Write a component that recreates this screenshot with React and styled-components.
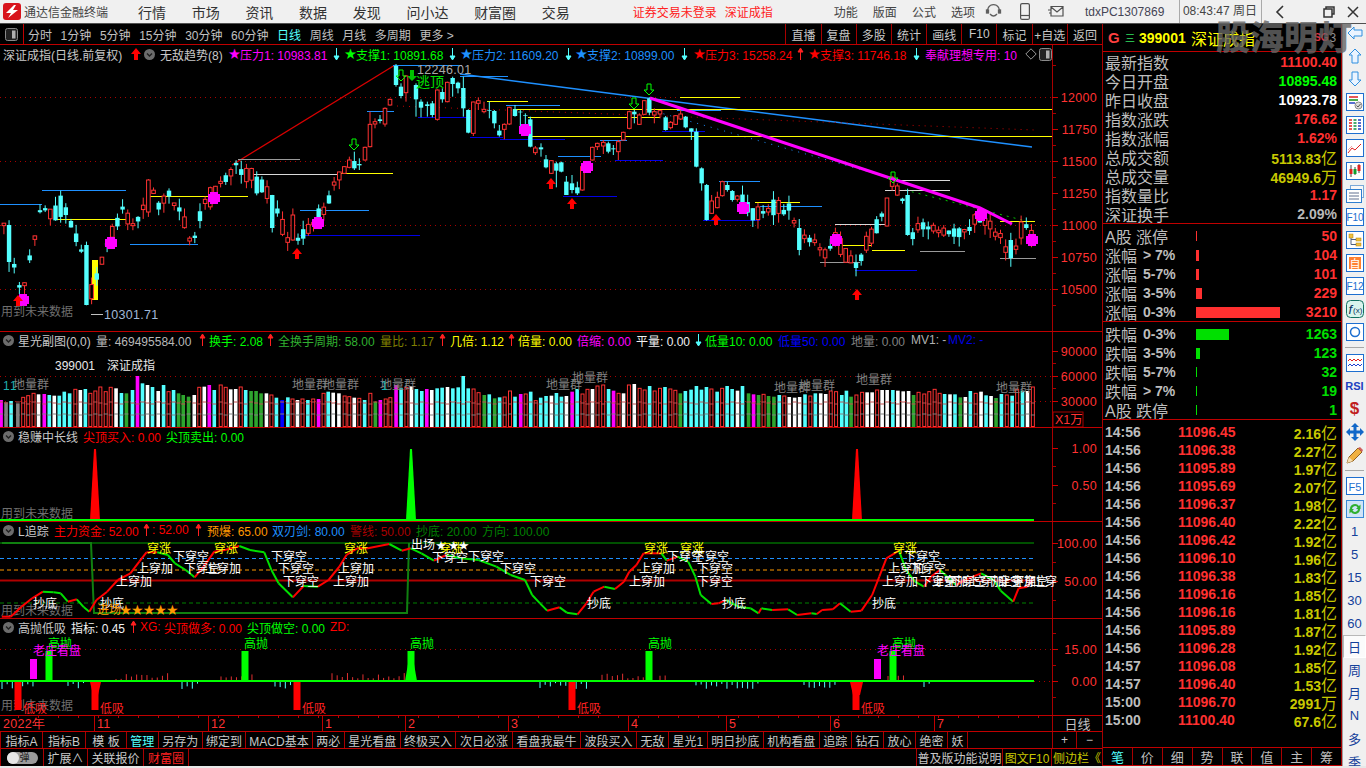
import React from "react";
import styled, { createGlobalStyle } from "styled-components";

const FONT = `"Liberation Sans", "Noto Sans CJK SC", sans-serif`;
const RED = "#a80000";
const TICK = "#ff3232";
const CYAN = "#54ffff";
const LBLUE = "#1e90ff";
const DBLUE = "#0000e6";
const YELLOW = "#ffff00";

const GlobalStyle = createGlobalStyle`
  html, body { margin: 0; padding: 0; background: #f0f0f0; }
  * { box-sizing: border-box; }
`;

const Root = styled.div`
  position: relative;
  width: 1366px;
  height: 768px;
  overflow: hidden;
  font-family: ${FONT};
  font-size: 12px;
  background: #f0f0f0;
  display: flex;
  flex-direction: column;
`;

/* ---------- title bar ---------- */
const TitleBar = styled.div`
  height: 24px;
  flex: none;
  display: flex;
  align-items: center;
  padding-left: 3px;
  background: #f0f0f0;
  border-bottom: 1px solid #505050;
  color: #444;
  white-space: nowrap;
`;
const AppName = styled.span`
  margin-left: 3px;
  width: 114px;
  font-size: 12px;
`;
const Menu = styled.div`
  display: flex;
  gap: 25.7px;
  font-size: 14px;
  color: #333;
`;
const Alert = styled.span`
  color: #ff2020;
  margin-left: ${(p) => p.$ml}px;
`;
const SysMenu = styled.div`
  display: flex;
  gap: 15px;
  margin-left: 61px;
`;
const IconGroup = styled.div`
  display: flex;
  align-items: center;
  gap: 18px;
  margin-left: 10px;
  width: 100px;
`;
const PcName = styled.span`
  width: 94px;
  color: #445;
`;
const Clock = styled.span`
  width: 83px;
  padding-left: 3px;
  height: 23px;
  line-height: 23px;
  border-left: 1px solid #aaa;
  border-right: 1px solid #aaa;
  color: #444;
`;
const WinControls = styled.div`
  display: flex;
  align-items: center;
  gap: 12px;
  margin-left: 13px;
`;
const WinGap = styled.span`
  width: 14px;
`;

/* ---------- toolbar ---------- */
const Body = styled.div`
  flex: none;
  height: 742px;
  display: flex;
  background: #000;
`;
const ChartColumn = styled.div`
  width: 1102px;
  flex: none;
  display: flex;
  flex-direction: column;
`;
const Toolbar = styled.div`
  height: 21px;
  flex: none;
  display: flex;
  align-items: center;
  border-bottom: 1px solid #c00000;
  color: #c0c0c0;
  white-space: nowrap;
`;
const ToggleCell = styled.div`
  width: 24px;
  height: 100%;
  display: flex;
  align-items: center;
  justify-content: center;
  border-right: 1px solid #c00000;
  margin-right: 4px;
`;
const Period = styled.span`
  margin-right: 8.6px;
  color: ${(p) => (p.$active ? CYAN : "#c0c0c0")};
`;
const ToolGroup = styled.div`
  margin-left: auto;
  display: flex;
  height: 100%;
`;
const ToolBtn = styled.div`
  width: 35.2px;
  display: flex;
  align-items: center;
  justify-content: center;
  border-left: 1px solid ${RED};
  color: #c8c8c8;
`;

/* ---------- panes ---------- */
const Pane = styled.div`
  position: relative;
  flex: none;
  height: ${(p) => p.$h}px;
  border-top: ${(p) => (p.$first ? "none" : `1px solid #c00000`)};
`;
const PaneSvg = styled.svg`
  display: block;
`;
const Legend = styled.div`
  position: absolute;
  left: 0;
  top: ${(p) => p.$top || 0}px;
  height: 16px;
  display: flex;
  align-items: center;
  white-space: nowrap;
  font-size: 12px;
`;
const LegendItem = styled.span`
  flex: none;
  width: ${(p) => p.$w}px;
  color: ${(p) => p.$c};
  display: inline-flex;
  align-items: center;
`;
const ChartText = styled.text`
  font-family: ${FONT};
  font-size: ${(p) => p.$size || 12}px;
`;
const AxisText = styled.text`
  font-family: "Liberation Sans", sans-serif;
  font-size: 12.5px;
  letter-spacing: 0.3px;
`;

/* ---------- bottom ---------- */
const DateRow = styled.div`
  height: 17px;
  flex: none;
  display: flex;
  border-top: 1px solid #c00000;
  border-bottom: 1px solid #c00000;
`;
const DateCell = styled.div`
  flex: 1;
  display: flex;
  align-items: center;
  justify-content: center;
  color: #c0c0c0;
  font-size: 13px;
  border-left: 1px solid ${RED};
`;
const TabRow = styled.div`
  height: ${(p) => p.$h}px;
  flex: none;
  display: flex;
  border-bottom: 1px solid #c00000;
  color: #c8c8c8;
  white-space: nowrap;
  border-left: 1px solid ${RED};
`;
const Tab = styled.div`
  flex: none;
  width: ${(p) => p.$w}px;
  display: flex;
  align-items: center;
  justify-content: center;
  border-right: ${(p) => (p.$open ? "none" : `1px solid ${RED}`)};
  border-left: ${(p) => (p.$lead ? `1px solid ${RED}` : "none")};
  color: ${(p) => p.$c || "#c8c8c8"};
`;
const TabSpacer = styled.div`
  margin-left: auto;
`;
const Pill = styled.div`
  width: 31px;
  height: 12px;
  border-radius: 6px;
  background: #9a9a9a;
  position: relative;
  color: #222;
  font-size: 10px;
  line-height: 12px;
  padding-left: 13px;
  &::before {
    content: "";
    position: absolute;
    left: 0;
    top: 0;
    width: 12px;
    height: 12px;
    border-radius: 50%;
    background: #e6e6e6;
  }
`;
const FooterStrip = styled.div`
  flex: 1;
  background: #e8e8e8;
`;

/* ---------- quote panel ---------- */
const QuotePanel = styled.div`
  width: 240px;
  flex: none;
  display: flex;
  flex-direction: column;
  border-left: 1px solid ${RED};
  border-right: 1px solid ${RED};
  border-bottom: 1px solid #c00000;
`;
const QuoteHead = styled.div`
  height: 28px;
  flex: none;
  display: flex;
  align-items: center;
  padding-left: 5px;
  border-bottom: 1px solid #c00000;
  color: ${YELLOW};
  font-size: 16px;
  white-space: nowrap;
`;
const HeadG = styled.span`
  color: #ff4040;
  font-weight: bold;
  font-size: 15px;
  width: 17px;
`;
const HeadBars = styled.span`
  color: #30e060;
  font-size: 10px;
  width: 14px;
`;
const HeadCode = styled.span`
  font-weight: bold;
  font-size: 14px;
  width: 52px;
`;
const HeadSg = styled.span`
  margin-left: 59px;
  color: #e03040;
  font-size: 10px;
  font-weight: bold;
`;
const HeadThree = styled.span`
  color: #909090;
  font-size: 12px;
  margin-left: 1px;
`;
const Section = styled.div`
  flex: none;
  padding-bottom: ${(p) => p.$pb || 0}px;
  border-bottom: 1px solid #c00000;
`;
const QuoteRow = styled.div`
  height: 19px;
  display: flex;
  align-items: center;
  justify-content: space-between;
  padding: 0 4px 0 2px;
  font-size: 16px;
  color: #bdbdbd;
`;
const Num = styled.span`
  font-weight: bold;
  font-size: 14px;
  color: ${(p) => p.$c};
`;
const Unit = styled.span`
  font-weight: normal;
  font-size: 16px;
  color: ${(p) => p.$c};
`;
const BandRow = styled.div`
  height: 19px;
  display: grid;
  grid-template-columns: 91px 1fr auto;
  align-items: center;
  padding: 0 4px 0 2px;
  font-size: 16px;
  color: #bdbdbd;
`;
const BandLabel = styled.span`
  display: flex;
  align-items: center;
  gap: 6px;
  white-space: nowrap;
`;
const BandRange = styled.span`
  font-weight: bold;
  font-size: 14px;
`;
const BandBar = styled.div`
  height: ${(p) => (p.$w > 1 ? 11 : 10)}px;
  width: ${(p) => p.$w}px;
  background: ${(p) => p.$c};
`;
const TickList = styled.div`
  flex: 1;
`;
const TickRow = styled.div`
  height: 18px;
  display: grid;
  grid-template-columns: 73px 60px 1fr;
  align-items: center;
  padding: 0 4px 0 2px;
`;
const TickVol = styled.span`
  text-align: right;
`;
const QuoteTabs = styled.div`
  height: 18px;
  flex: none;
  display: flex;
  border-top: 1px solid #c00000;
`;
const QuoteTab = styled.div`
  flex: 1;
  display: flex;
  align-items: center;
  justify-content: center;
  font-size: 13px;
  color: ${(p) => (p.$active ? CYAN : "#bdbdbd")};
  border-right: 1px solid ${RED};
  &:last-child {
    border-right: none;
  }
`;

/* ---------- side bar ---------- */
const SideBar = styled.div`
  flex: 1;
  background: #f0f0f0;
  border-left: 1px solid #a0a0a0;
  display: flex;
  flex-direction: column;
  overflow: hidden;
`;
const SideInner = styled.div`
  margin-top: -3px;
  display: flex;
  flex-direction: column;
  align-items: center;
`;
const SideItem = styled.div`
  height: 23px;
  width: 23px;
  flex: none;
  display: flex;
  align-items: center;
  justify-content: center;
  color: ${(p) => p.$c || "#14409a"};
  font-size: ${(p) => p.$size || 13}px;
  font-weight: ${(p) => (p.$bold ? "bold" : "normal")};
  ${(p) =>
    p.$active &&
    `background:#fbfbfb;border:1px solid #b8b8b8;border-right-color:#fff;border-bottom-color:#fff;`}
`;
const SideRule = styled.div`
  width: 19px;
  height: 8px;
  flex: none;
  display: flex;
  align-items: center;
  &::after {
    content: "";
    width: 100%;
    height: 1px;
    background: #a8a8a8;
  }
`;
const Watermark = styled.div`
  position: absolute;
  left: 1216px;
  top: 14px;
  font-size: 34px;
  line-height: 44px;
  font-weight: 900;
  font-family: "Noto Sans CJK SC", sans-serif;
  color: #666;
  opacity: 0.8;
  white-space: nowrap;
  pointer-events: none;
`;

/* ---------- data ---------- */
const makeRnd = (seed) => () => {
  seed = (seed * 16807) % 2147483647;
  return (seed - 1) / 2147483646;
};
const interp = (pts, x) => {
  for (let i = 1; i < pts.length; i++) {
    if (x <= pts[i][0]) {
      const [x0, y0] = pts[i - 1];
      const [x1, y1] = pts[i];
      return y0 + ((y1 - y0) * (x - x0)) / (x1 - x0);
    }
  }
  return pts[pts.length - 1][1];
};

const LEFT_PATH = [
  [0, 225], [10, 235], [18, 285], [24, 290], [32, 250], [42, 200], [52, 215], [62, 205], [72, 225], [85, 255],
  [90, 300], [100, 270], [110, 240], [122, 210], [135, 225], [150, 185], [160, 205], [170, 195], [180, 210],
  [192, 245], [205, 200], [218, 185], [235, 165], [250, 175], [262, 185], [275, 205], [285, 235], [297, 240],
  [308, 225], [320, 215], [332, 190], [344, 170],
];
const RIGHT_PATH = [
  [737, 197], [745, 205], [760, 215], [775, 205], [790, 212], [800, 235], [815, 245], [825, 258], [835, 240],
  [845, 250], [855, 265], [870, 240], [882, 215], [892, 182], [902, 195], [912, 235], [925, 225], [940, 232],
  [955, 235], [970, 225], [985, 220], [1000, 235], [1012, 257], [1022, 228], [1034, 235],
];
// peak section, read off the chart: x, body top, body bottom, wick top, wick bottom, up
const PEAK = [
  [13,320,340,318,342,1],[28,300,322,290,325,1],[43,303,325,275,330,0],[58,312,316,295,330,0],[75,262,300,260,302,1],
  [90,193,260,155,262,1],[105,185,192,175,205,1],[120,178,183,165,190,0],[135,145,192,142,200,1],[150,118,135,116,137,1],
  [168,18,75,12,80,0],[183,80,108,70,115,0],[198,48,98,45,125,1],[228,75,118,70,170,0],[243,125,143,118,172,0],
  [262,133,138,125,170,0],[277,130,165,123,172,0],[292,90,178,88,182,1],[307,96,118,85,128,0],[322,67,125,65,127,1],
  [338,54,72,50,110,0],[354,68,85,65,100,0],[370,84,145,50,170,0],[385,150,218,148,220,0],[400,126,220,125,228,1],
  [415,122,130,112,150,1],[432,148,155,125,160,1],[448,150,152,125,175,0],[463,153,190,150,205,0],[478,212,226,195,230,0],
  [493,193,208,190,238,1],[508,142,192,140,195,1],[525,148,168,135,170,0],[541,155,157,150,200,0],[556,165,167,160,195,0],
  [571,178,260,170,262,0],[586,264,278,258,285,1],[603,262,268,250,290,0],[618,298,322,285,325,0],[634,302,340,300,342,1],
  [649,310,332,305,382,0],[664,307,335,305,337,0],[679,365,405,348,405,0],[696,370,390,345,400,0],[712,382,400,365,405,0],
  [727,320,390,320,392,1],[757,262,300,260,302,1],[772,250,260,248,270,1],[790,247,258,240,282,1],[805,250,275,245,280,0],
  [820,265,268,255,285,0],[835,245,275,240,300,1],[850,217,240,215,242,1],[868,155,205,152,208,1],[883,155,163,150,190,0],
  [898,165,193,160,195,1],[913,122,163,120,165,1],[928,115,158,112,165,0],[943,155,165,145,190,1],[960,152,162,150,175,1],
  [977,172,210,168,212,0],[992,187,203,183,208,1],[1007,167,193,165,195,1],[1022,162,177,150,180,1],[1037,170,202,168,205,0],
  [1054,205,215,205,240,0],[1069,215,320,205,322,0],[1085,325,370,322,392,0],[1100,375,480,372,482,0],[1115,423,460,405,462,1],
  [1132,412,443,395,445,1],[1147,365,407,362,410,1],[1162,375,390,365,395,0],[1177,393,420,390,425,0],[1192,408,418,405,425,1],
].map(([zx, t, b, wt, wb, up]) => ({
  x: 340 + zx / 3,
  top: 60 + t / 3,
  bottom: 60 + b / 3,
  wickTop: 60 + wt / 3,
  wickBottom: 60 + wb / 3,
  up: !!up,
}));

// the tall bodies that stand out from the generated series: x, top, bottom, up
const TALL = [
  [8, 225, 262, 0], [88, 245, 305, 0], [150, 180, 212, 1], [270, 195, 228, 0], [293, 215, 240, 1], [362, 148, 172, 1],
  [800, 228, 250, 0], [885, 198, 226, 1], [906, 195, 235, 0], [1012, 240, 258, 0], [1021, 222, 238, 1],
];

const genCandles = (path, x0, x1, seed) => {
  const rnd = makeRnd(seed);
  const out = [];
  for (let x = x0; x <= x1; x += 5.16) {
    const tall = TALL.find((t) => Math.abs(t[0] - x) < 2.6);
    const center = interp(path, x) + (rnd() - 0.5) * 9;
    const size = 2 + rnd() * rnd() * 20;
    const isUp = rnd() < 0.52;
    const top = tall ? tall[1] : center - size / 2;
    const bottom = tall ? tall[2] : center + size / 2;
    out.push({
      x,
      top,
      bottom,
      wickTop: top - rnd() * 9,
      wickBottom: bottom + rnd() * 10,
      up: tall ? !!tall[3] : isUp,
    });
  }
  return out;
};
const CANDLES = [
  ...genCandles(LEFT_PATH, 3.9, 340, 77),
  ...PEAK,
  ...genCandles(RIGHT_PATH, 742.5, 1034, 4242),
];

const SEGMENTS = [
  [0, 42, 204, LBLUE], [42, 126, 190, LBLUE], [55, 130, 219, YELLOW], [130, 198, 244, LBLUE], [150, 248, 196, YELLOW],
  [238, 300, 159, "#9a9a9a"], [252, 340, 174, "#d8d8d8"], [340, 393, 173, YELLOW], [300, 369, 210, LBLUE],
  [300, 420, 235, DBLUE], [367, 394, 111, LBLUE], [393, 462, 65, LBLUE], [460, 508, 76, LBLUE], [418, 471, 117, DBLUE],
  [470, 503, 137, DBLUE], [500, 565, 139, DBLUE], [487, 528, 101, YELLOW], [506, 560, 105, LBLUE], [558, 601, 156, LBLUE],
  [600, 627, 140, LBLUE], [615, 663, 160, DBLUE], [563, 617, 196, DBLUE], [662, 705, 131, DBLUE], [703, 760, 220, DBLUE],
  [719, 760, 181, LBLUE], [677, 721, 110, LBLUE], [513, 1052, 109, YELLOW], [530, 1052, 136, YELLOW], [528, 660, 117, YELLOW],
  [680, 740, 97, YELLOW], [755, 800, 202, YELLOW], [760, 822, 206, LBLUE], [835, 885, 224, "#d8d8d8"], [820, 860, 262, "#9a9a9a"],
  [855, 917, 270, DBLUE], [840, 872, 245, YELLOW], [872, 905, 250, YELLOW], [885, 950, 190, "#d8d8d8"], [900, 950, 180, "#d8d8d8"],
  [920, 965, 251, "#9a9a9a"], [1000, 1035, 221, YELLOW], [1000, 1036, 258, "#9a9a9a"],
];
const BLOBS = [[23, 300], [111, 243], [214, 198], [318, 223], [525, 130], [587, 167], [743, 208], [836, 240], [981, 215], [1032, 240]];
const RED_ARROWS = [[18, 295], [297, 248], [551, 178], [572, 198], [716, 214], [857, 289]];
const GREEN_ARROWS = [[354, 144], [634, 103], [649, 89], [893, 177], [401, 75]];

const VOL_A = "3M225 17G232 31C228 50G235 65R217 79R212 94R205 108W208 124M207 138C210 152W212 166C212 180C200 195C205 211R193 225W195 239C192 253R205 267R198 281R186 296R200 310R187 325W190 340C204 354N205 371C195 385M153 399C175 413W180 427C186 443W198 458C180 472R200 486C195 500N205 513N210 528N215 544W210 558R187 572W185 586M180 600C195 618R180 632R187 646W193 660W192 674R186 688C195 703N198 717N198 731N205 746W205 760R210 774C218 790B225 806C217 819R222 833W225 847R222 862C225 877R222 892M222 906R205 919C200 933W203 949W205 965R213 978R215 992W218 1006R220 1021C225 1037R205 1051N230 1065M225 1080R222 1093R218 1109M180 1123C190 1138R187 1152W183 1166C192 1181C198 1195M192 1209W195 1224C190 1238C188 1253W186 1268C190 1283C187 1297C153 1311C190 1326R192 1340R203 1356N210 1370C208 1385N220 1399C217 1413R216 1428R198 1442C215 1458M207 1472R207 1486C200 1500R227";
const VOL_B = "2C218 17C213 32W212 46C204 60C215 74W213 90M200 104C192 119R207 133R193 147W192 161R183 177R180 192C192 206M197 220R205 234W205 249R180 264W177 279R190 293R195 307C183 321R198 336R190 350C186 365R192 379R196 393N205 407C198 423C194 438C183 452C194 466C186 480R192 496C200 510R190 524C183 538C192 553W197 567C183 584N205 598M208 612N210 626R208 640N213 655N215 670C210 684R213 698W216 713W218 727W216 742C208 757R213 771C205 786W205 800W207 814R198 829R200 845C210 858C197 871N215 886R210 902R202 916W202 930W202 944R195 958W195 972W195 988C195 1002W197 1017W199 1032W198 1046N210 1060R202 1076R207 1090R200 1105R193 1119R205 1133C207 1148W208 1162C208 1177N217 1191W216 1205C198 1220R205 1235W200 1249C211 1263W213 1277N219 1292C207 1307R210 1322C212 1336R193 1351C197 1365W198 1380R186";
const VOL_COLORS = { M: "#ff00ff", G: "#808080", C: CYAN, W: "#ffffff", N: "#2ea52e", B: "#0000ff" };
const parseVol = (s, x0) =>
  s.split(" ").map((t) => {
    const m = t.match(/^(\d+)([A-Z])(\d+)$/);
    return { x: x0 + Number(m[1]) / 2.8, kind: m[2], top: 325 + Number(m[3]) / 3 };
  });
const VOLUMES = [...parseVol(VOL_A, 0), ...parseVol(VOL_B, 540)];

const zc = (pts, x0) => pts.map(([x, y]) => [x0 + x / 2.8, 520 + y / 3]);
const TRACK = [
  ...zc([[5,290],[30,290],[60,260],[90,235],[120,215],[150,217],[170,220],[190,245],[215,238],[235,262],[250,275],[270,240],[300,215],[330,180],[365,160],[390,125],[410,97],[440,97],[470,105],[490,130],[520,150],[545,172],[570,140],[600,95],[630,90],[670,78],[700,90],[740,97],[760,150],[780,190],[820,232],[850,198],[890,200],[920,180],[950,140],[970,105],[1000,85],[1030,85],[1090,72],[1125,92],[1150,85],[1180,100],[1215,122],[1250,105],[1290,115],[1340,120],[1390,140],[1430,165],[1470,180],[1490,225]], 0),
  ...zc([[0,250],[20,272],[55,262],[75,278],[105,283],[130,250],[150,215],[180,200],[210,207],[235,185],[250,155],[270,135],[290,100],[340,100],[355,122],[385,110],[415,125],[435,170],[450,225],[480,252],[500,250],[520,240],[560,262],[590,265],[612,280],[620,265],[650,270],[695,268],[720,285],[760,280],[775,282],[790,270],[820,268],[840,250],[870,275],[900,272],[930,225],[950,170],[970,115],[1005,92],[1025,150],[1050,185],[1075,200],[1095,170],[1120,150],[1135,165],[1165,195],[1200,175],[1235,160],[1270,180],[1290,212],[1325,245],[1340,205],[1365,200],[1380,172]], 540),
];
const W = "#ffffff";
const TRACK_LABELS = [
  [33,603,"抄底",W],[100,603,"抄底",W],[97,609,"进场","#ff9900"],[116,581,"上穿加",W],[137,568,"上穿加",W],[173,556,"下穿空",W],
  [184,568,"下穿空",W],[205,568,"上穿加",W],[147,548,"穿涨",YELLOW],[214,548,"穿涨",YELLOW],[271,556,"下穿空",W],[278,568,"下穿空",W],
  [283,581,"下穿空",W],[344,548,"穿涨",YELLOW],[338,568,"上穿加",W],[333,581,"上穿加",W],[411,544,"出场",W],[439,548,"穿涨",YELLOW],
  [432,557,"下穿空",W],[468,556,"下穿空",W],[500,568,"下穿空",W],[530,581,"下穿空",W],[587,603,"抄底",W],[639,568,"上穿加",W],
  [629,581,"上穿加",W],[644,548,"穿涨",YELLOW],[680,548,"穿涨",YELLOW],[667,556,"下穿空",W],[693,556,"下穿空",W],[697,568,"下穿空",W],
  [697,581,"下穿空",W],[722,603,"抄底",W],[872,603,"抄底",W],[893,548,"穿涨",YELLOW],[904,556,"下穿空",W],[888,568,"上穿加",W],
  [910,568,"下穿空",W],[882,581,"上穿加",W],[920,581,"下穿空",W],[932,581,"上穿加",W],[950,581,"下穿空",W],[968,581,"上穿加",W],
  [986,581,"下穿空",W],[1000,581,"上穿加",W],[1012,581,"下穿空",W],[1033,581,"上穿",W],
];
const VOL_LABELS = [[13,385],[292,385],[323,385],[380,385],[546,385],[572,378],[774,388],[799,386],[856,380],[996,388]];

const UP_TICKS = [[116,172],[221,257],[332,407],[602,647],[660,666],[888,908]];
const DOWN_TICKS = [[2,35],[68,88],[182,200],[275,300],[540,587],[696,760],[804,835],[924,930]];
const GREEN_BARS = [[49,651],[245,651],[411,651],[649,651],[893,651]];
const DIP_BARS = [[18,710],[95,710],[297,710],[572,710],[856,710]];
const DATE_MARKS = [["11",94],["12",208],["1",322],["2",405],["3",508],["4",628],["5",726],["6",830],["7",934]];

const TAB_ROW = [
  ["指标A",42],["指标B",43],["模 板",41],["管理",31.5],["另存为",44.5],["绑定到",43],["MACD基本",67],["两必",31.5],["星光看盘",56.5],
  ["终极买入",55],["次日必涨",57],["看盘我最牛",68],["波段买入",56],["无敌",32],["星光1",38.5],["明日抄底",56.5],["机构看盘",55.6],
  ["追踪",32.4],["钻石",32],["放心",32],["绝密",32],["妖",20],
];
const TICKS = [
  ["14:56","11096.45","2.16","亿"],["14:56","11096.38","2.27","亿"],["14:56","11095.89","1.97","亿"],["14:56","11095.69","2.07","亿"],
  ["14:56","11096.37","1.98","亿"],["14:56","11096.40","2.22","亿"],["14:56","11096.42","1.92","亿"],["14:56","11096.10","1.96","亿"],
  ["14:56","11096.38","1.83","亿"],["14:56","11096.16","1.85","亿"],["14:56","11096.16","1.81","亿"],["14:56","11095.89","1.87","亿"],
  ["14:56","11096.28","1.92","亿"],["14:57","11096.08","1.85","亿"],["14:57","11096.40","1.53","亿"],["15:00","11096.70","2991","万"],
  ["15:00","11100.40","67.6","亿"],
];

/* ---------- small drawings ---------- */
const Chevron = () => (
  <svg width="11" height="11" viewBox="0 0 11 11">
    <circle cx="5.5" cy="5.5" r="5.5" fill="#6c6c6c" />
    <path d="M3 4.5 L5.5 7 L8 4.5" stroke="#202020" strokeWidth="1.4" fill="none" />
  </svg>
);
const ThinArrow = ({ up, color }) => (
  <svg width="7" height="14" viewBox="0 0 7 14">
    {up ? (
      <path d="M3.5 13V2 M1 5 L3.5 1 L6 5Z" stroke={color} fill={color} strokeWidth="1" />
    ) : (
      <path d="M3.5 1V12 M1 9 L3.5 13 L6 9Z" stroke={color} fill={color} strokeWidth="1" />
    )}
  </svg>
);
const BlockUp = () => (
  <svg width="10" height="12" viewBox="0 0 10 12">
    <path d="M5 0 L10 6 H7 V12 H3 V6 H0Z" fill="#ff0000" />
  </svg>
);
const SquareToggle = () => (
  <svg width="13" height="13" viewBox="0 0 13 13">
    <rect x="0.5" y="0.5" width="12" height="12" rx="2" fill="#222" stroke="#8a8a8a" />
    <rect x="7" y="2.5" width="3.5" height="8" fill="#b0b0b0" />
  </svg>
);
const Diamond = () => (
  <svg width="12" height="12" viewBox="0 0 12 12">
    <path d="M6 0.8 L11.2 6 L6 11.2 L0.8 6Z" fill="none" stroke="#9a9a9a" />
  </svg>
);
const Star = styled.span`
  font-family: "DejaVu Sans", sans-serif;
  font-size: 14.5px;
  width: 12px;
  line-height: 1;
`;
const Mark = ({ w, c, text, star }) => (
  <LegendItem $w={w} $c={c}>
    {star && <Star>★</Star>}
    {text}
  </LegendItem>
);

const SB = ({ children }) => (
  <svg width="18" height="18" viewBox="0 0 18 18">
    <rect x="0.5" y="0.5" width="17" height="17" fill="#fff" stroke="#1e6fd0" />
    {children}
  </svg>
);
const SideIcons = {
  left: (
    <svg width="16" height="14" viewBox="0 0 16 14"><path d="M1 7 L7 1 V4 H15 V10 H7 V13Z" fill="#eaf4ff" stroke="#2f8fe0" /></svg>
  ),
  up: (
    <svg width="14" height="16" viewBox="0 0 14 16"><path d="M7 1 L13 7 H10 V15 H4 V7 H1Z" fill="#eaf4ff" stroke="#2f8fe0" /></svg>
  ),
  down: (
    <svg width="14" height="16" viewBox="0 0 14 16"><path d="M7 15 L13 9 H10 V1 H4 V9 H1Z" fill="#eaf4ff" stroke="#2f8fe0" /></svg>
  ),
  report: (
    <SB>
      <path d="M3 4H12" stroke="#e02020" strokeWidth="1.5" />
      <path d="M3 7H12" stroke="#109010" strokeWidth="1.5" />
      <path d="M3 10H9" stroke="#2040c0" strokeWidth="1.5" />
      <circle cx="12.5" cy="12.5" r="3.5" fill="#ddd" stroke="#888" />
      <path d="M10.5 12.5 L12 14 L14.5 11" stroke="#555" fill="none" />
    </SB>
  ),
  grid: (
    <SB>
      <path d="M3 4H6 M3 7H6 M3 10H6 M3 13H6" stroke="#e02020" strokeWidth="1.5" />
      <path d="M7.5 4H10.5 M7.5 7H10.5 M7.5 10H10.5 M7.5 13H10.5" stroke="#109040" strokeWidth="1.5" />
      <path d="M12 4H15 M12 7H15 M12 10H15 M12 13H15" stroke="#2040c0" strokeWidth="1.5" />
    </SB>
  ),
  line: (
    <SB>
      <path d="M2 14 L6 9 L9 11 L15 5" stroke="#e02020" fill="none" />
      <path d="M2 11 L6 7" stroke="#e8a0a0" fill="none" />
    </SB>
  ),
  candle: (
    <SB>
      <path d="M5 3V15 M9 5V13 M13 2V11" stroke="#444" />
      <rect x="3.5" y="7" width="3" height="5" fill="#e02020" />
      <rect x="7.5" y="7" width="3" height="5" fill="#10a030" />
      <rect x="11.5" y="3" width="3" height="6" fill="#e02020" />
    </SB>
  ),
  cards: (
    <svg width="20" height="18" viewBox="0 0 20 18">
      <rect x="5.5" y="0.5" width="13" height="12" fill="#f8f8f8" stroke="#7aa8d8" />
      <rect x="1.5" y="4.5" width="15" height="13" fill="#fff" stroke="#2f7fd0" />
      <path d="M4 8H14 M4 11H14 M4 14H14" stroke="#607090" />
    </svg>
  ),
  f10: (
    <SB>
      <ChartText x="9" y="13" textAnchor="middle" fill="#1e6fd0" $size={10}>F10</ChartText>
    </SB>
  ),
  tree: (
    <SB>
      <rect x="3" y="3" width="4" height="4" fill="#f0c040" stroke="#b08000" strokeWidth="0.5" />
      <rect x="10" y="7" width="5" height="3" fill="#f0c040" stroke="#b08000" strokeWidth="0.5" />
      <rect x="10" y="12" width="5" height="3" fill="#f0c040" stroke="#b08000" strokeWidth="0.5" />
      <path d="M5 7V13.5H10 M5 8.5H10" stroke="#506080" fill="none" />
    </SB>
  ),
  zi: (
    <SB>
      <rect x="3" y="3" width="12" height="12" fill="#ff8030" />
      <ChartText x="9" y="13.5" textAnchor="middle" fill="#fff" $size={11}>自</ChartText>
    </SB>
  ),
  f12: (
    <SB>
      <ChartText x="9" y="13" textAnchor="middle" fill="#1e6fd0" $size={10}>F12</ChartText>
    </SB>
  ),
  fx: (
    <svg width="18" height="18" viewBox="0 0 18 18">
      <rect x="0.5" y="0.5" width="17" height="17" rx="4" fill="#d8f4ec" stroke="#107060" />
      <ChartText x="2.5" y="14" fill="#0a3060" $size={13} fontStyle="italic">f</ChartText>
      <ChartText x="7" y="13" fill="#0a3060" $size={8}>(x)</ChartText>
    </svg>
  ),
  circle: (
    <SB>
      <circle cx="9" cy="9" r="4.5" fill="none" stroke="#1e6fd0" strokeWidth="1.5" />
    </SB>
  ),
  wave: (
    <SB>
      <path d="M2 7 L4 5 L6 7 L8 5 L10 7 L12 5 L14 7 L16 5" stroke="#e02020" fill="none" />
      <path d="M2 12 L4 10 L6 12 L8 10 L10 12 L12 10 L14 12 L16 10" stroke="#2040d0" fill="none" />
    </SB>
  ),
  move: (
    <svg width="18" height="18" viewBox="0 0 18 18" fill="#1268c8">
      <path d="M9 0 L13 4 H10.5 V7.5 H14 V5 L18 9 L14 13 V10.5 H10.5 V14 H13 L9 18 L5 14 H7.5 V10.5 H4 V13 L0 9 L4 5 V7.5 H7.5 V4 H5Z" />
    </svg>
  ),
  pencil: (
    <svg width="18" height="18" viewBox="0 0 18 18">
      <path d="M1 17 L3 11 L12 2 L16 6 L7 15Z" fill="#f0b040" stroke="#906020" />
      <path d="M1 17 L3 11 L7 15Z" fill="#f4dcb0" />
      <path d="M12 2 L16 6 L17 4 L14 1Z" fill="#d06060" />
    </svg>
  ),
  f5: (
    <SB>
      <ChartText x="9" y="13.5" textAnchor="middle" fill="#1e6fd0" $size={11}>F5</ChartText>
    </SB>
  ),
  refresh: (
    <svg width="18" height="18" viewBox="0 0 18 18">
      <rect x="0.5" y="0.5" width="17" height="17" fill="#cfe4f8" stroke="#3a8ad8" />
      <path d="M4 9 A5 5 0 0 1 13 6 L14.5 4.5 V9 H10 L11.5 7.5 A3 3 0 0 0 6 9Z" fill="#30b030" />
      <path d="M14 9 A5 5 0 0 1 5 12 L3.5 13.5 V9 H8 L6.5 10.5 A3 3 0 0 0 12 9Z" fill="#30b030" />
    </svg>
  ),
};

/* ---------- chart panes ---------- */
const ChartSvg = ({ top, h, children }) => (
  <PaneSvg width="1102" height={h} viewBox={`0 ${top} 1102 ${h}`}>
    {children}
  </PaneSvg>
);
const Axis = ({ top, bottom, marks, minor = [] }) => (
  <g>
    <line x1="1052.5" y1={top} x2="1052.5" y2={bottom} stroke={RED} />
    {minor.map((y) => (
      <line key={y} x1="1052" y1={y + 0.5} x2="1056" y2={y + 0.5} stroke={RED} />
    ))}
    {marks.map(([y, label]) => (
      <g key={label}>
        <line x1="1052" y1={y + 0.5} x2="1058" y2={y + 0.5} stroke="#d00000" />
        <AxisText x="1097" y={y + 4.5} textAnchor="end" fill={TICK}>
          {label}
        </AxisText>
      </g>
    ))}
  </g>
);
const Dotted = ({ y, x2 = 1052 }) => (
  <line x1="0" y1={y + 0.5} x2={x2} y2={y + 0.5} stroke={RED} strokeDasharray="1 4" />
);
const Unreal = ({ y }) => (
  <ChartText x="1" y={y} fill="#6e6e6e">
    用到未来数据
  </ChartText>
);

const Candle = ({ c }) => {
  const color = c.up ? TICK : CYAN;
  return (
    <g>
      <line x1={c.x} y1={c.wickTop} x2={c.x} y2={c.wickBottom} stroke={color} />
      {c.up ? (
        <rect x={c.x - 1.8} y={c.top} width="3.6" height={c.bottom - c.top} fill="#000" stroke={color} />
      ) : (
        <rect x={c.x - 2.2} y={c.top} width="4.4" height={c.bottom - c.top} fill={color} />
      )}
    </g>
  );
};

const MainPane = () => (
  <Pane $h={286} $first>
    <ChartSvg top={45} h={286}>
      {[97, 161, 225, 289].map((y) => (
        <Dotted key={y} y={y} />
      ))}
      <Axis
        top={45}
        bottom={331}
        marks={[[97,"12000"],[129,"11750"],[161,"11500"],[193,"11250"],[225,"11000"],[257,"10750"],[289,"10500"]]}
        minor={[65,113,145,177,209,241,273,305]}
      />
      <polyline points="232,165 395,65" stroke="#d80000" strokeWidth="1.4" fill="none" />
      <polyline points="460,74 740,110 1032,147" stroke={LBLUE} strokeWidth="1.5" fill="none" />
      <polyline points="397,106 1035,130" stroke="#c00000" strokeDasharray="1 5" fill="none" />
      <polyline points="650,110 880,175" stroke={LBLUE} strokeDasharray="1 6" fill="none" />
      <polyline points="905,190 1030,222" stroke="#00c000" strokeDasharray="2 5" fill="none" />
      {SEGMENTS.map(([x1, x2, y, c], i) => (
        <line key={i} x1={x1} y1={y + 0.5} x2={x2} y2={y + 0.5} stroke={c} />
      ))}
      <rect x="92" y="260" width="6" height="40" fill={YELLOW} />
      {CANDLES.map((c, i) => (
        <Candle key={i} c={c} />
      ))}
      <polyline points="650,98 740,128 890,178 980,208 1012,224" stroke="#ff00ff" strokeWidth="3" fill="none" />
      {BLOBS.map(([x, y]) => (
        <g key={x} fill="#ff00ff">
          <rect x={x - 6} y={y - 4} width="12" height="8" />
          <rect x={x - 4} y={y - 6} width="8" height="12" />
        </g>
      ))}
      {RED_ARROWS.map(([x, y]) => (
        <path key={x} d={`M${x} ${y} l5 6 h-3 v5 h-4 v-5 h-3z`} fill="#ff0000" />
      ))}
      {GREEN_ARROWS.map(([x, y]) => (
        <path key={x} d={`M${x} ${y + 6} l5 -5 h-3 v-6 h-4 v6 h-3z`} fill="none" stroke="#00ff00" />
      ))}
      <path d="M412 81 l5 -5 h-3 v-6 h-4 v6 h-3z" fill="#00c000" />
      <AxisText x="417" y="74" fill="#a8a8a8">12246.01</AxisText>
      <ChartText x="416" y="87" fill="#00e000" $size={14}>逃顶</ChartText>
      <line x1="91" y1="314.5" x2="103" y2="314.5" stroke="#c0c0c0" />
      <AxisText x="104" y="319" fill="#a0b8d8">10301.71</AxisText>
      <Unreal y={316} />
    </ChartSvg>
    <Legend $top={1}>
      <LegendItem $w={3} />
      <Mark w={128} c="#c8c8c8" text="深证成指(日线.前复权)" />
      <LegendItem $w={13}><BlockUp /></LegendItem>
      <LegendItem $w={16}><Chevron /></LegendItem>
      <Mark w={68} c="#c8c8c8" text="无敌趋势(8)" />
      <Mark w={105} c="#ff00ff" star text="压力1: 10983.81" />
      <LegendItem $w={11}><ThinArrow color={CYAN} /></LegendItem>
      <Mark w={105} c="#00ff00" star text="支撑1: 10891.68" />
      <LegendItem $w={11}><ThinArrow color={CYAN} /></LegendItem>
      <Mark w={105} c={LBLUE} star text="压力2: 11609.20" />
      <LegendItem $w={10}><ThinArrow color={CYAN} /></LegendItem>
      <Mark w={106} c={LBLUE} star text="支撑2: 10899.00" />
      <LegendItem $w={12}><ThinArrow color={CYAN} /></LegendItem>
      <Mark w={104} c="#ff0000" star text="压力3: 15258.24" />
      <LegendItem $w={11}><ThinArrow up color="#ff2020" /></LegendItem>
      <Mark w={105} c="#ff0000" star text="支撑3: 11746.18" />
      <LegendItem $w={12}><ThinArrow color={CYAN} /></LegendItem>
      <Mark w={100} c="#ff00ff" text="奉献理想专用: 10" />
      <LegendItem $w={14}><Diamond /></LegendItem>
      <LegendItem $w={13}><SquareToggle /></LegendItem>
    </Legend>
  </Pane>
);

const VolumePane = () => (
  <Pane $h={96}>
    <ChartSvg top={332} h={95}>
      <Dotted y={376} />
      <Dotted y={401} />
      <Axis top={332} bottom={427} marks={[[351,"90000"],[376,"60000"],[401,"30000"]]} minor={[363,388,414]} />
      {VOLUMES.map((b, i) =>
        b.kind === "R" ? (
          <rect key={i} x={b.x - 1.5} y={b.top} width="3" height={426.5 - b.top} fill="#000" stroke={TICK} />
        ) : (
          <rect key={i} x={b.x - 1.8} y={b.top} width="3.6" height={427 - b.top} fill={VOL_COLORS[b.kind]} />
        ),
      )}
      {VOLUMES.map((b, i) => (
        <g key={i}>
          <line x1={b.x - 2} y1={402 + (i % 3)} x2={b.x + 2} y2={402 + (i % 3)} stroke="#c05050" />
          <line x1={b.x - 2} y1={414 + (i % 2)} x2={b.x + 2} y2={414 + (i % 2)} stroke="#808080" />
        </g>
      ))}
      {VOL_LABELS.map(([x, y]) => (
        <ChartText key={x} x={x} y={y + 4} fill="#808080">地量群</ChartText>
      ))}
      <ChartText x="3" y="390" fill="#20b0b0">1</ChartText>
      <ChartText x="10" y="390" fill="#20b0b0">1</ChartText>
      <ChartText x="381" y="390" fill="#20b0b0">1</ChartText>
      <ChartText x="55" y="370" fill="#e8e8e8">399001</ChartText>
      <ChartText x="107" y="370" fill="#e8e8e8">深证成指</ChartText>
      <rect x="1053" y="412" width="30" height="15" fill="#000" stroke={RED} />
      <ChartText x="1055" y="424" fill={TICK} $size={12.5}>X1万</ChartText>
    </ChartSvg>
    <Legend>
      <LegendItem $w={3} />
      <LegendItem $w={15}><Chevron /></LegendItem>
      <Mark w={78} c="#c8c8c8" text="星光副图(0,0)" />
      <Mark w={103} c="#b8b8b8" text="量: 469495584.00" />
      <LegendItem $w={10}><ThinArrow up color="#ff2020" /></LegendItem>
      <Mark w={58} c="#00ff00" text="换手: 2.08" />
      <LegendItem $w={11}><ThinArrow up color="#ff2020" /></LegendItem>
      <Mark w={102} c="#30b030" text="全换手周期: 58.00" />
      <Mark w={59} c="#808000" text="量比: 1.17" />
      <LegendItem $w={11}><ThinArrow up color="#ff2020" /></LegendItem>
      <Mark w={58} c={YELLOW} text="几倍: 1.12" />
      <LegendItem $w={10}><ThinArrow up color="#ff2020" /></LegendItem>
      <Mark w={59} c={YELLOW} text="倍量: 0.00" />
      <Mark w={59} c="#ff00ff" text="倍缩: 0.00" />
      <Mark w={59} c="#f0f0f0" text="平量: 0.00" />
      <LegendItem $w={10}><ThinArrow color={CYAN} /></LegendItem>
      <Mark w={73} c="#00ff00" text="低量10: 0.00" />
      <Mark w={73} c="#0000ff" text="低量50: 0.00" />
      <Mark w={60} c="#808080" text="地量: 0.00" />
      <Mark w={37} c="#b0b0b0" text="MV1: -" />
      <Mark w={40} c="#0000e0" text="MV2: -" />
    </Legend>
  </Pane>
);

const Spike = ({ x, color }) => (
  <path d={`M${x - 5} 520 L${x - 1} 449 H${x + 1} L${x + 5} 520Z`} fill={color} />
);
const TrendPane = () => (
  <Pane $h={94}>
    <ChartSvg top={428} h={93}>
      <Axis top={428} bottom={521} marks={[[448,"1.00"],[485,"0.50"]]} minor={[466,503]} />
      <Spike x={95} color="#ff0000" />
      <Spike x={411} color="#00ff00" />
      <Spike x={857} color="#ff0000" />
      <line x1="0" y1="520" x2="1034" y2="520" stroke="#00ff00" strokeWidth="2" />
      <Unreal y={518} />
    </ChartSvg>
    <Legend>
      <LegendItem $w={3} />
      <LegendItem $w={15}><Chevron /></LegendItem>
      <Mark w={65} c="#c8c8c8" text="稳赚中长线" />
      <Mark w={83} c="#ff0000" text="尖顶买入: 0.00" />
      <Mark w={80} c="#00ff00" text="尖顶卖出: 0.00" />
    </Legend>
  </Pane>
);

const TrackPane = () => (
  <Pane $h={97}>
    <ChartSvg top={522} h={96}>
      <line x1="0" y1="543" x2="1034" y2="543" stroke="#00a000" />
      <line x1="0" y1="558.5" x2="1034" y2="558.5" stroke={LBLUE} strokeDasharray="4 3" />
      <line x1="0" y1="570" x2="1034" y2="570" stroke="#ff9900" strokeDasharray="4 3" />
      <line x1="0" y1="580.5" x2="1034" y2="580.5" stroke="#b00000" strokeWidth="2" />
      <line x1="0" y1="603" x2="1034" y2="603" stroke="#008000" strokeDasharray="4 3" />
      <Axis top={522} bottom={618} marks={[[543,"100.00"],[581,"50.00"]]} minor={[562,600]} />
      <Unreal y={615} />
      <polyline points="2,543 91,543 94,613 407,613 409,543" stroke="#108010" strokeWidth="2" fill="none" />
      {TRACK.slice(1).map(([x, y], i) => {
        const [px, py] = TRACK[i];
        if (x < px) return null;
        return <line key={i} x1={px} y1={py} x2={x} y2={y} stroke={y > py ? "#00e000" : "#ff0000"} strokeWidth="2" />;
      })}
      {TRACK_LABELS.map(([x, y, t, c], i) => (
        <ChartText key={i} x={x} y={y + 4.5} fill={c}>
          {t}
        </ChartText>
      ))}
      <ChartText x="120" y="614" fill="#ff9900" $size={11.6}>★★★★★</ChartText>
      <ChartText x="436" y="549" fill="#ffffff" $size={10}>★ ★★</ChartText>
    </ChartSvg>
    <Legend>
      <LegendItem $w={3} />
      <LegendItem $w={15}><Chevron /></LegendItem>
      <Mark w={36} c="#c8c8c8" text="L追踪" />
      <Mark w={89} c="#ff0000" text="主力资金: 52.00" />
      <LegendItem $w={9}><ThinArrow up color="#ff2020" /></LegendItem>
      <Mark w={43} c="#ff0000" text=": 52.00" />
      <LegendItem $w={12}><ThinArrow up color="#ff2020" /></LegendItem>
      <Mark w={65} c="#ff9900" text="预爆: 65.00" />
      <Mark w={78} c={LBLUE} text="双刃剑: 80.00" />
      <Mark w={66} c="#a80000" text="警线: 50.00" />
      <Mark w={66} c="#008000" text="抄底: 20.00" />
      <Mark w={70} c="#008000" text="方向: 100.00" />
    </Legend>
  </Pane>
);

const TICK_RND = makeRnd(99);
const tickBars = (ranges, dir, color, max) =>
  ranges.flatMap(([a, b]) => {
    const out = [];
    for (let x = a; x <= b; x += 5.16) {
      const len = 2 + TICK_RND() * max;
      out.push(<line key={`${dir}${x}`} x1={x} y1="681" x2={x} y2={681 + dir * len} stroke={color} />);
    }
    return out;
  });
const UP_TICK_BARS = tickBars(UP_TICKS, -1, "#e03030", 6);
const DOWN_TICK_BARS = tickBars(DOWN_TICKS, 1, CYAN, 6);

const SwingPane = () => (
  <Pane $h={97}>
    <ChartSvg top={619} h={96}>
      <Dotted y={649} />
      <line x1="1034" y1="681.5" x2="1052" y2="681.5" stroke={RED} strokeDasharray="1 4" />
      <Axis top={619} bottom={715} marks={[[649,"15.00"],[681,"0.00"]]} minor={[633,665,697]} />
      {UP_TICK_BARS}
      {DOWN_TICK_BARS}
      <Unreal y={710} />
      {GREEN_BARS.map(([x, y]) => (
        <rect key={x} x={x - 3.5} y={y} width="7" height={681 - y} fill="#00ff00" />
      ))}
      <path d="M405 681 L408 664 H414 L417 681Z" fill="#00ff00" />
      <rect x="30" y="659" width="7" height="20" fill="#ff00ff" />
      <rect x="874" y="659" width="7" height="20" fill="#ff00ff" />
      <line x1="0" y1="681" x2="1034" y2="681" stroke="#00ff00" strokeWidth="2" />
      {DIP_BARS.map(([x, y]) => (
        <rect key={x} x={x - 3.5} y="682" width="7" height={y - 682} fill="#ff0000" />
      ))}
      <path d="M90 682 H101 L98 695 H93Z" fill="#ff0000" />
      <path d="M850 682 H863 L860 695 H853Z" fill="#ff0000" />
      {GREEN_BARS.map(([x]) => (
        <ChartText key={x} x={x - 1} y={648} fill="#00ff00" $size={12}>高抛</ChartText>
      ))}
      <ChartText x="33" y="655" fill="#ff00ff">老庄看盘</ChartText>
      <ChartText x="877" y="655" fill="#ff00ff">老庄看盘</ChartText>
      {DIP_BARS.map(([x]) => (
        <ChartText key={x} x={x + 5} y={713} fill="#ff2020">低吸</ChartText>
      ))}
    </ChartSvg>
    <Legend>
      <LegendItem $w={3} />
      <LegendItem $w={15}><Chevron /></LegendItem>
      <Mark w={53} c="#c8c8c8" text="高抛低吸" />
      <Mark w={59} c="#f0f0f0" text="指标: 0.45" />
      <LegendItem $w={10}><ThinArrow up color="#ff2020" /></LegendItem>
      <Mark w={24} c="#ff0000" text="XG:" />
      <Mark w={83} c="#ff0000" text="尖顶做多: 0.00" />
      <Mark w={83} c="#00ff00" text="尖顶做空: 0.00" />
      <Mark w={30} c="#ff0000" text="ZD:" />
    </Legend>
  </Pane>
);

const DateAxis = () => {
  const minor = [];
  for (let x = 18; x < 1052; x += 20) minor.push(x);
  return (
    <DateRow>
      <PaneSvg width="1052" height="15" viewBox="0 0 1052 15">
        {minor.map((x) => (
          <line key={x} x1={x + 0.5} y1="0" x2={x + 0.5} y2="2" stroke="#c00000" />
        ))}
        <AxisText x="3" y="12" fill={TICK}>2022年</AxisText>
        {DATE_MARKS.map(([t, x]) => (
          <g key={t}>
            <line x1={x + 0.5} y1="0" x2={x + 0.5} y2="15" stroke="#c00000" />
            <AxisText x={x + 3} y="12" fill={TICK}>{t}</AxisText>
          </g>
        ))}
      </PaneSvg>
      <DateCell>日线</DateCell>
    </DateRow>
  );
};

/* ---------- page ---------- */
const Logo = () => (
  <svg width="18" height="17" viewBox="0 0 18 17">
    <rect width="18" height="17" rx="3" fill="#d8141c" />
    <path d="M11 2 L3 10 H8 L5 15 L15 7 H10 L13 2Z" fill="#fff" />
  </svg>
);

const QUOTES = [
  ["最新指数", "11100.40", "#ff3030"], ["今日开盘", "10895.48", "#00ff00"], ["昨日收盘", "10923.78", "#ffffff"],
  ["指数涨跌", "176.62", "#ff3030"], ["指数涨幅", "1.62%", "#ff3030"], ["总成交额", "5113.83", "#c8c800", "亿"],
  ["总成交量", "46949.6", "#c8c800", "万"], ["指数量比", "1.17", "#ff3030"], ["深证换手", "2.09%", "#b8b8b8"],
];
const UP_BANDS = [["A股 涨停", "", 1, "50"], ["涨幅", "> 7%", 3, "104"], ["涨幅", "5-7%", 3, "101"], ["涨幅", "3-5%", 6, "229"], ["涨幅", "0-3%", 84, "3210"]];
const DOWN_BANDS = [["跌幅", "0-3%", 33, "1263"], ["跌幅", "3-5%", 4, "123"], ["跌幅", "5-7%", 1, "32"], ["跌幅", "> 7%", 1, "19"], ["A股 跌停", "", 1, "1"]];

const Band = ({ row, color }) => (
  <BandRow>
    <BandLabel>
      {row[0]}
      {row[1] && <BandRange>{row[1]}</BandRange>}
    </BandLabel>
    <BandBar $c={color} $w={row[2]} />
    <Num $c={color}>{row[3]}</Num>
  </BandRow>
);

export default function App() {
  return (
    <Root>
      <GlobalStyle />
      <TitleBar>
        <Logo />
        <AppName>通达信金融终端</AppName>
        <Menu>
          {["行情", "市场", "资讯", "数据", "发现", "问小达", "财富圈", "交易"].map((m) => (
            <span key={m}>{m}</span>
          ))}
        </Menu>
        <Alert $ml={63}>证券交易未登录</Alert>
        <Alert $ml={8}>深证成指</Alert>
        <SysMenu>
          {["功能", "版面", "公式", "选项"].map((m) => (
            <span key={m}>{m}</span>
          ))}
        </SysMenu>
        <IconGroup>
          <svg width="17" height="17" viewBox="0 0 17 17" fill="none" stroke="#606060" strokeWidth="1.3">
            <path d="M3 10 A6 6 0 1 1 14 10" />
            <path d="M5 11 Q8.5 15 12 11" />
            <rect x="1.5" y="7" width="2" height="3" fill="#606060" />
            <rect x="13.5" y="7" width="2" height="3" fill="#606060" />
          </svg>
          <svg width="10" height="17" viewBox="0 0 10 17" fill="none" stroke="#505050" strokeWidth="1.2">
            <rect x="0.6" y="0.6" width="8.8" height="15.8" rx="1.5" />
            <path d="M1 12.5H9" />
          </svg>
          <svg width="16" height="13" viewBox="0 0 16 13" fill="none" stroke="#505050" strokeWidth="1.2">
            <path d="M3 1.5H15V11H3Z M3 2 L9 7 L15 2 M0 5H3 M1 8H3" />
          </svg>
        </IconGroup>
        <PcName>tdxPC1307869</PcName>
        <Clock>08:43:47 周日</Clock>
        <WinControls>
          <svg width="10" height="14" viewBox="0 0 10 14" fill="none" stroke="#333" strokeWidth="1.6">
            <path d="M8 1 L2 7 L8 13" />
          </svg>
          <WinGap />
          <svg width="12" height="12" viewBox="0 0 12 12" fill="none" stroke="#333" strokeWidth="1.5">
            <path d="M3 3V1H11V8H9 M1 3H9V11H1Z" />
          </svg>
          <svg width="12" height="12" viewBox="0 0 12 12" fill="none" stroke="#333" strokeWidth="1.5">
            <path d="M1 1 L11 11 M11 1 L1 11" />
          </svg>
        </WinControls>
      </TitleBar>
      <Body>
        <ChartColumn>
          <Toolbar>
            <ToggleCell>
              <SquareToggle />
            </ToggleCell>
            {["分时", "1分钟", "5分钟", "15分钟", "30分钟", "60分钟", "日线", "周线", "月线", "多周期", "更多 >"].map((p) => (
              <Period key={p} $active={p === "日线"}>
                {p}
              </Period>
            ))}
            <ToolGroup>
              {["直播", "复盘", "多股", "统计", "画线", "F10", "标记", "+自选", "返回"].map((t) => (
                <ToolBtn key={t}>{t}</ToolBtn>
              ))}
            </ToolGroup>
          </Toolbar>
          <MainPane />
          <VolumePane />
          <TrendPane />
          <TrackPane />
          <SwingPane />
          <DateAxis />
          <TabRow $h={17}>
            {TAB_ROW.map(([t, w]) => (
              <Tab key={t} $w={w} $c={t === "管理" ? CYAN : undefined}>
                {t}
              </Tab>
            ))}
            <TabSpacer />
            <Tab $w={25} $lead>+</Tab>
            <Tab $w={25} $open>−</Tab>
          </TabRow>
          <TabRow $h={18}>
            <Tab $w={43}>
              <Pill>弹</Pill>
            </Tab>
            <Tab $w={44}>扩展∧</Tab>
            <Tab $w={56}>关联报价</Tab>
            <Tab $w={45} $c="#ff2020">财富圈</Tab>
            <TabSpacer />
            <Tab $w={87} $lead>普及版功能说明</Tab>
            <Tab $w={49} $c="#c8c800">图文F10</Tab>
            <Tab $w={50} $c="#c8c800" $open>侧边栏《</Tab>
          </TabRow>
        </ChartColumn>

        <QuotePanel>
          <QuoteHead>
            <HeadG>G</HeadG>
            <HeadBars>三</HeadBars>
            <HeadCode>399001</HeadCode>
            深证成指
            <HeadSg>SG</HeadSg>
            <HeadThree>3</HeadThree>
          </QuoteHead>
          <Section>
            {QUOTES.map(([label, value, color, unit]) => (
              <QuoteRow key={label}>
                {label}
                <span>
                  <Num $c={color}>{value}</Num>
                  {unit && <Unit $c={color}>{unit}</Unit>}
                </span>
              </QuoteRow>
            ))}
          </Section>
          <Section $pb={2}>
            {UP_BANDS.map((row) => (
              <Band key={row[0] + row[1]} row={row} color="#ff3030" />
            ))}
          </Section>
          <Section $pb={2}>
            {DOWN_BANDS.map((row) => (
              <Band key={row[0] + row[1]} row={row} color="#00e000" />
            ))}
          </Section>
          <TickList>
            {TICKS.map(([time, price, vol, unit], i) => (
              <TickRow key={i}>
                <Num $c="#bdbdbd">{time}</Num>
                <Num $c="#ff3030">{price}</Num>
                <TickVol>
                  <Num $c="#c8c800">{vol}</Num>
                  <Unit $c="#c8c800">{unit}</Unit>
                </TickVol>
              </TickRow>
            ))}
          </TickList>
          <QuoteTabs>
            {["笔", "价", "细", "势", "联", "值", "主", "筹"].map((t) => (
              <QuoteTab key={t} $active={t === "笔"}>
                {t}
              </QuoteTab>
            ))}
          </QuoteTabs>
        </QuotePanel>

        <SideBar>
          <SideInner>
            {["left", "up", "down", "report", "grid", "line", "candle", "cards", "f10", "tree", "zi", "f12", "fx", "circle"].map((k) => (
              <SideItem key={k}>{SideIcons[k]}</SideItem>
            ))}
            <SideRule />
            <SideItem>{SideIcons.wave}</SideItem>
            <SideItem $c="#2040c0" $bold $size={11}>RSI</SideItem>
            <SideItem $c="#c02020" $bold $size={17}>$</SideItem>
            <SideItem>{SideIcons.move}</SideItem>
            <SideItem>{SideIcons.pencil}</SideItem>
            <SideRule />
            <SideItem>{SideIcons.f5}</SideItem>
            <SideItem>{SideIcons.refresh}</SideItem>
            {["1", "5", "15", "30", "60"].map((t) => (
              <SideItem key={t}>{t}</SideItem>
            ))}
            <SideItem $active>日</SideItem>
            {["周", "月", "N", "多", "季"].map((t) => (
              <SideItem key={t}>{t}</SideItem>
            ))}
          </SideInner>
        </SideBar>
      </Body>
      <FooterStrip />
      <Watermark>股海明灯</Watermark>
    </Root>
  );
}
